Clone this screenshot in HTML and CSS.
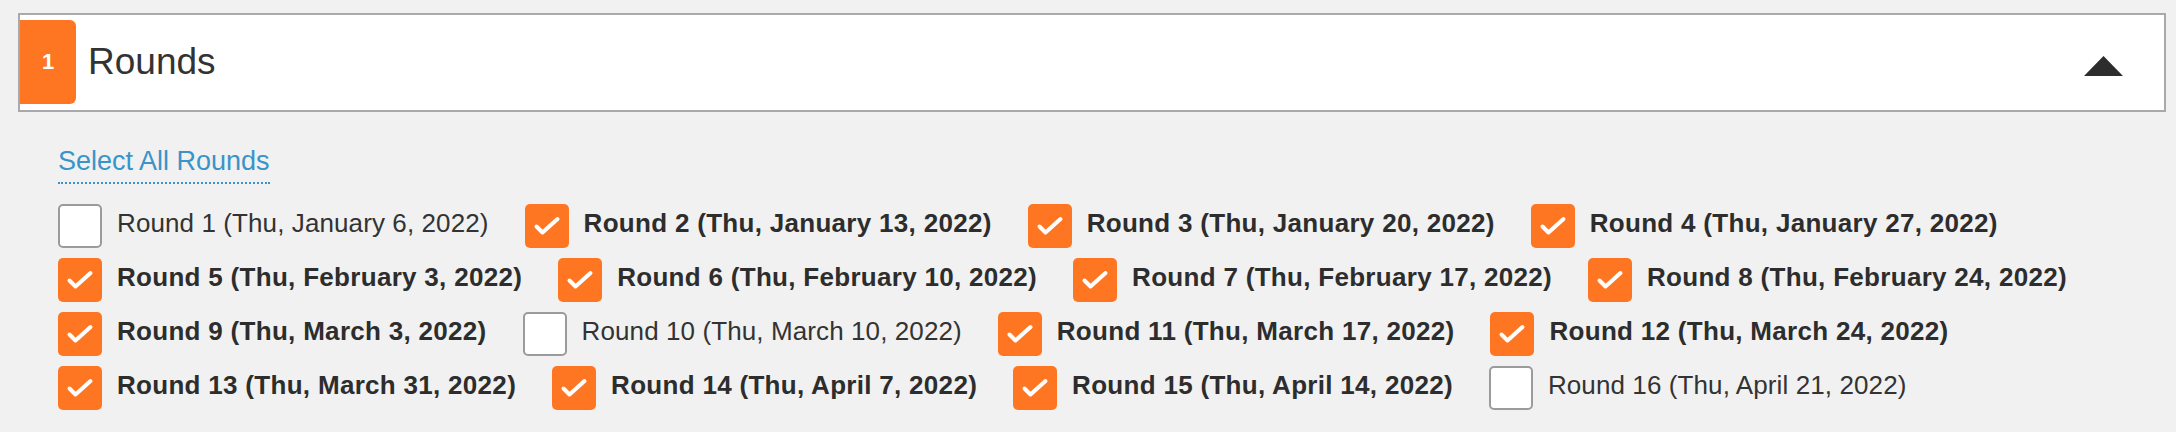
FILE: index.html
```html
<!DOCTYPE html>
<html lang="en">
<head>
<meta charset="utf-8">
<title>Rounds</title>
<link rel="stylesheet" href="styles.css">
</head>
<body>
<section class="panel">
  <header class="panel-header">
    <span class="step">1</span>
    <h2 class="title">Rounds</h2>
    <svg class="caret" viewBox="0 0 39 20" aria-hidden="true"><polygon points="0,20 19.5,0 39,20"/></svg>
  </header>
  <div class="panel-body">
    <a class="select-all" href="#">Select All Rounds</a>
    <ul class="rounds">
      <li class="round"><span class="box"></span><span class="label">Round 1 (Thu, January 6, 2022)</span></li>
      <li class="round is-checked"><span class="box"><svg viewBox="0 0 44 44"><polyline points="11.5,22.5 17.5,28.5 32.5,15"/></svg></span><span class="label">Round 2 (Thu, January 13, 2022)</span></li>
      <li class="round is-checked"><span class="box"><svg viewBox="0 0 44 44"><polyline points="11.5,22.5 17.5,28.5 32.5,15"/></svg></span><span class="label">Round 3 (Thu, January 20, 2022)</span></li>
      <li class="round is-checked"><span class="box"><svg viewBox="0 0 44 44"><polyline points="11.5,22.5 17.5,28.5 32.5,15"/></svg></span><span class="label">Round 4 (Thu, January 27, 2022)</span></li>
      <li class="round is-checked"><span class="box"><svg viewBox="0 0 44 44"><polyline points="11.5,22.5 17.5,28.5 32.5,15"/></svg></span><span class="label">Round 5 (Thu, February 3, 2022)</span></li>
      <li class="round is-checked"><span class="box"><svg viewBox="0 0 44 44"><polyline points="11.5,22.5 17.5,28.5 32.5,15"/></svg></span><span class="label">Round 6 (Thu, February 10, 2022)</span></li>
      <li class="round is-checked"><span class="box"><svg viewBox="0 0 44 44"><polyline points="11.5,22.5 17.5,28.5 32.5,15"/></svg></span><span class="label">Round 7 (Thu, February 17, 2022)</span></li>
      <li class="round is-checked"><span class="box"><svg viewBox="0 0 44 44"><polyline points="11.5,22.5 17.5,28.5 32.5,15"/></svg></span><span class="label">Round 8 (Thu, February 24, 2022)</span></li>
      <li class="round is-checked"><span class="box"><svg viewBox="0 0 44 44"><polyline points="11.5,22.5 17.5,28.5 32.5,15"/></svg></span><span class="label">Round 9 (Thu, March 3, 2022)</span></li>
      <li class="round"><span class="box"></span><span class="label">Round 10 (Thu, March 10, 2022)</span></li>
      <li class="round is-checked"><span class="box"><svg viewBox="0 0 44 44"><polyline points="11.5,22.5 17.5,28.5 32.5,15"/></svg></span><span class="label">Round 11 (Thu, March 17, 2022)</span></li>
      <li class="round is-checked"><span class="box"><svg viewBox="0 0 44 44"><polyline points="11.5,22.5 17.5,28.5 32.5,15"/></svg></span><span class="label">Round 12 (Thu, March 24, 2022)</span></li>
      <li class="round is-checked"><span class="box"><svg viewBox="0 0 44 44"><polyline points="11.5,22.5 17.5,28.5 32.5,15"/></svg></span><span class="label">Round 13 (Thu, March 31, 2022)</span></li>
      <li class="round is-checked"><span class="box"><svg viewBox="0 0 44 44"><polyline points="11.5,22.5 17.5,28.5 32.5,15"/></svg></span><span class="label">Round 14 (Thu, April 7, 2022)</span></li>
      <li class="round is-checked"><span class="box"><svg viewBox="0 0 44 44"><polyline points="11.5,22.5 17.5,28.5 32.5,15"/></svg></span><span class="label">Round 15 (Thu, April 14, 2022)</span></li>
      <li class="round"><span class="box"></span><span class="label">Round 16 (Thu, April 21, 2022)</span></li>
    </ul>
  </div>
</section>
</body>
</html>
```

FILE: styles.css
```css
body {
  margin: 0;
  background: #f1f1f1;
  font-family: "Liberation Sans", Arial, sans-serif;
  color: #2d2d2d;
}

.panel-header {
  margin: 13px 10px 0 18px;
  height: 99px;
  box-sizing: border-box;
  border: 2px solid #a9a9ad;
  background: #fff;
  display: flex;
  align-items: center;
}

.step {
  align-self: flex-start;
  margin-top: 5px;
  width: 56px;
  height: 84px;
  background: #ff7622;
  color: #fff;
  border-radius: 0 6px 6px 0;
  display: flex;
  align-items: center;
  justify-content: center;
  font-weight: bold;
  font-size: 22px;
}

.title {
  flex: 1;
  margin: 0 0 3px 12px;
  font-size: 37px;
  line-height: 1;
  font-weight: normal;
  color: #333;
}

.caret {
  width: 39px;
  height: 20px;
  margin: 7px 41px 0 0;
  fill: #2d2d2d;
}

.panel-body {
  padding-left: 58px;
  display: flex;
  flex-direction: column;
  align-items: flex-start;
}

.select-all {
  margin-top: 33px;
  font-size: 27px;
  line-height: 32px;
  padding-bottom: 5px;
  color: #3a94c9;
  text-decoration: none;
  border-bottom: 2px dotted #3a94c9;
}

.rounds {
  list-style: none;
  margin: 20px 0 0;
  padding: 0;
  display: flex;
  flex-wrap: wrap;
  row-gap: 10px;
  column-gap: 36px;
}

.round {
  display: flex;
  align-items: center;
  gap: 15px;
  height: 44px;
}

.box {
  width: 44px;
  height: 44px;
  box-sizing: border-box;
  border-radius: 5px;
  background: #fff;
  border: 2px solid #9b9b9b;
}

.is-checked .box {
  background: #ff7622;
  border: none;
}

.box svg {
  display: block;
  width: 44px;
  height: 44px;
  fill: none;
  stroke: #fff;
  stroke-width: 4;
  stroke-linecap: round;
  stroke-linejoin: round;
}

.label {
  font-size: 26px;
  line-height: 30px;
  margin-bottom: 6px;
  letter-spacing: 0.1px;
  color: #333;
  white-space: nowrap;
}

.is-checked .label {
  font-weight: bold;
  letter-spacing: 0.3px;
  color: #2d2d2d;
}
```
